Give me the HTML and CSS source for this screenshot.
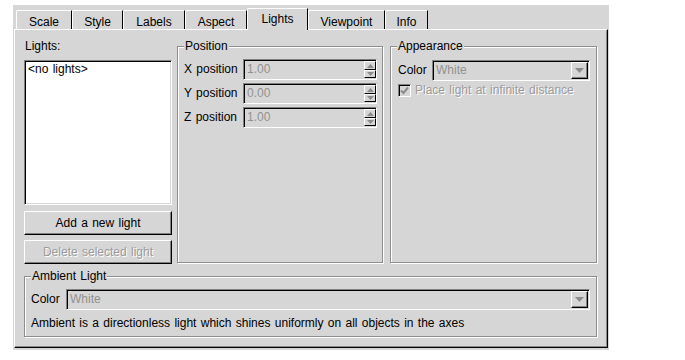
FILE: index.html
```html
<!DOCTYPE html>
<html>
<head>
<meta charset="utf-8">
<link rel="stylesheet" href="styles.css">
</head>
<body>
<div class="window">
  <div class="tabs">
    <div class="tab t-scale">Scale</div>
    <div class="tab t-style">Style</div>
    <div class="tab t-labels">Labels</div>
    <div class="tab t-aspect">Aspect</div>
    <div class="tab sel t-lights">Lights</div>
    <div class="tab t-view">Viewpoint</div>
    <div class="tab t-info">Info</div>
  </div>
  <div class="panel">
    <div class="top">
      <div class="lights-col">
        <div class="label">Lights:</div>
        <div class="list">&lt;no lights&gt;</div>
        <button class="btn add">Add a new light</button>
        <button class="btn del">Delete selected light</button>
      </div>
      <div class="group pos">
        <span class="legend">Position</span>
        <div class="row"><span class="rlabel">X position</span>
          <div class="field spin"><span class="val">1.00</span>
            <div class="arrows">
              <span class="sb up"><svg width="7" height="4" viewBox="0 0 7 4"><path d="M0 4L3.5 0L7 4Z" fill="#8c8c8c"/></svg></span>
              <span class="sb down"><svg width="7" height="4" viewBox="0 0 7 4"><path d="M0 0L3.5 4L7 0Z" fill="#8c8c8c"/></svg></span>
            </div>
          </div>
        </div>
        <div class="row"><span class="rlabel">Y position</span>
          <div class="field spin"><span class="val">0.00</span>
            <div class="arrows">
              <span class="sb up"><svg width="7" height="4" viewBox="0 0 7 4"><path d="M0 4L3.5 0L7 4Z" fill="#8c8c8c"/></svg></span>
              <span class="sb down"><svg width="7" height="4" viewBox="0 0 7 4"><path d="M0 0L3.5 4L7 0Z" fill="#8c8c8c"/></svg></span>
            </div>
          </div>
        </div>
        <div class="row"><span class="rlabel">Z position</span>
          <div class="field spin"><span class="val">1.00</span>
            <div class="arrows">
              <span class="sb up"><svg width="7" height="4" viewBox="0 0 7 4"><path d="M0 4L3.5 0L7 4Z" fill="#8c8c8c"/></svg></span>
              <span class="sb down"><svg width="7" height="4" viewBox="0 0 7 4"><path d="M0 0L3.5 4L7 0Z" fill="#8c8c8c"/></svg></span>
            </div>
          </div>
        </div>
      </div>
      <div class="group app">
        <span class="legend">Appearance</span>
        <div class="row"><span class="clabel">Color</span>
          <div class="field combo"><span class="val">White</span>
            <span class="drop"><svg width="9" height="5" viewBox="0 0 9 5"><path d="M0 0L4.5 5L9 0Z" fill="#8c8c8c"/></svg></span>
          </div>
        </div>
        <div class="check">
          <span class="box"><svg width="9" height="9" viewBox="0 0 9 9"><path d="M1 4.5L3.5 7L8 1.5" fill="none" stroke="#8c8c8c" stroke-width="2"/></svg></span>
          <span class="ctext">Place light at infinite distance</span>
        </div>
      </div>
    </div>
    <div class="group amb">
      <span class="legend">Ambient Light</span>
      <div class="row"><span class="alabel">Color</span>
        <div class="field combo wide"><span class="val">White</span>
          <span class="drop"><svg width="9" height="5" viewBox="0 0 9 5"><path d="M0 0L4.5 5L9 0Z" fill="#8c8c8c"/></svg></span>
        </div>
      </div>
      <div class="desc">Ambient is a directionless light which shines uniformly on all objects in the axes</div>
    </div>
  </div>
</div>
</body>
</html>
```

FILE: styles.css
```css
* { box-sizing: border-box; }
body {
  margin: 0;
  background: #ffffff;
  font-family: "Liberation Sans", Arial, sans-serif;
  font-size: 12px;
  line-height: 13px;
  word-spacing: 1px;
  color: #000;
}
.window {
  margin: 5px 0 0 13px;
  width: 596px;
  background: #d6d6d6;
  padding: 0 1px 2px 1px;
}
.tabs {
  display: flex;
  align-items: flex-end;
  height: 24px;
  padding-left: 2px;
}
.tab {
  height: 19px;
  border-left: 1px solid #fff;
  border-top: 1px solid #fff;
  border-right: 1px solid #000;
  border-top-left-radius: 2px;
  text-align: center;
  padding-top: 5px;
  background: #d6d6d6;
}
.tab.sel {
  height: 22px;
  margin-bottom: -1px;
  position: relative;
  z-index: 1;
  padding-top: 4px;
}
.t-scale { width: 56px; }
.t-style { width: 51px; }
.t-labels { width: 62px; }
.t-aspect { width: 62px; }
.t-lights { width: 61px; }
.t-view { width: 77px; }
.t-info { width: 43px; }

.panel {
  width: 594px;
  border: 1px solid;
  border-color: #fff #000 #000 #fff;
  box-shadow: inset -1px -1px 0 #8a8a8a;
  padding: 10px 9px 10px 9px;
}
.top {
  display: flex;
  height: 224px;
}
.lights-col {
  width: 148px;
  margin-right: 5px;
  display: flex;
  flex-direction: column;
}
.label { height: 13px; padding-left: 1px; }
.list {
  margin-top: 7px;
  height: 145px;
  background: #fff;
  border: 1px solid;
  border-color: #808080 #fff #fff #808080;
  box-shadow: inset 1px 1px 0 #000, inset -1px -1px 0 #d6d6d6;
  padding: 2px 3px;
}
.btn {
  display: block;
  width: 148px;
  height: 24px;
  margin: 6px 0 0 0;
  padding: 0;
  font: inherit;
  word-spacing: inherit;
  color: #000;
  background: #d6d6d6;
  border: 1px solid;
  border-color: #fff #000 #000 #fff;
  box-shadow: inset -1px -1px 0 #808080;
}
.btn.del {
  margin-top: 5px;
  color: #9c9c9c;
  text-shadow: 1px 1px 0 #fff;
}

.group {
  position: relative;
  border: 1px solid #8e8e8e;
  box-shadow: inset 1px 1px 0 #fff, 1px 1px 0 #fff;
}
.legend {
  position: absolute;
  top: -7px;
  left: 6px;
  padding: 0 1px;
  line-height: 13px;
  background: #d6d6d6;
}
.pos {
  width: 206px;
  margin: 6px 7px 1px 0;
  padding: 12px 5px 0 6px;
}
.app {
  width: 207px;
  margin: 6px 0 1px 0;
  padding: 13px 6px 0 7px;
}
.row {
  display: flex;
  align-items: center;
  height: 21px;
  margin-bottom: 3px;
}
.rlabel { width: 59px; }
.clabel { width: 34px; }
.alabel { width: 35px; }
.field {
  height: 21px;
  display: flex;
  align-items: center;
  border: 1px solid;
  border-color: #808080 #fff #fff #808080;
  box-shadow: inset 1px 1px 0 #000, inset -1px -1px 0 #d6d6d6;
  padding-left: 3px;
}
.val { color: #929292; }
.spin { width: 134px; }
.arrows {
  margin-left: auto;
  display: flex;
  flex-direction: column;
  margin-right: 0;
}
.sb {
  width: 12px;
  height: 9px;
  display: flex;
  align-items: center;
  justify-content: center;
  border: 1px solid;
  border-color: #fff #000 #000 #fff;
  background: #d6d6d6;
}
.sb.down { height: 8px; }
.combo { width: 158px; }
.combo.wide { width: auto; flex: 1; }
.drop {
  margin-left: auto;
  margin-right: 1px;
  width: 17px;
  height: 17px;
  display: flex;
  align-items: center;
  justify-content: center;
  border: 1px solid;
  border-color: #fff #000 #000 #fff;
  box-shadow: inset -1px -1px 0 #808080;
  background: #d6d6d6;
}
.check {
  display: flex;
  align-items: center;
  margin-top: 3px;
  height: 13px;
}
.box {
  width: 13px;
  height: 13px;
  display: flex;
  align-items: center;
  justify-content: center;
  border: 1px solid;
  border-color: #808080 #fff #fff #808080;
  box-shadow: inset 1px 1px 0 #000;
  background: #d6d6d6;
  margin-right: 4px;
}
.ctext {
  color: #9c9c9c;
  text-shadow: 1px 1px 0 #fff;
}
.amb {
  margin: 12px 0 0 0;
  width: 573px;
  padding: 12px 6px 6px 6px;
}
.amb .row { margin-bottom: 0; }
.desc {
  margin-top: 7px;
  height: 13px;
}
```
